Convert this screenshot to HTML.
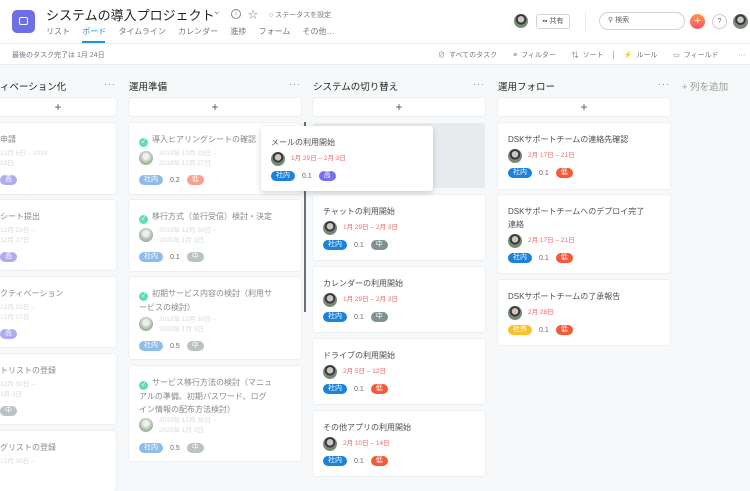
<!DOCTYPE html>
<html><head><meta charset="utf-8"><style>
*{margin:0;padding:0;box-sizing:border-box}
body{width:750px;height:468px;overflow:hidden;font-family:"Liberation Sans","Noto Sans CJK JP",sans-serif;background:#f6f8f9;position:relative;color:#333}
.a{position:absolute}
.hdr{left:0;top:0;width:750px;height:44px;background:#fff;border-bottom:1px solid #e8ecee}
.sub{left:0;top:44px;width:750px;height:21px;background:#fff;border-bottom:1px solid #e8ecee;font-size:7px;color:#6f7782}
.card{position:absolute;background:#fff;border-radius:3px;box-shadow:0 0 0 1px #edf0f2,0 1px 1px rgba(0,0,0,.04)}
.t{position:absolute;left:10px;top:10px;font-size:8px;line-height:13px;color:#4a4f55;white-space:nowrap}
.g{color:#888}
.av{position:absolute;width:14px;height:14px;border-radius:50%;background:radial-gradient(circle at 50% 38%,#d8c3b0 0 3px,#2d3a4c 3.5px 5px,#7a8a70 5.5px)}
.avf{background:radial-gradient(circle at 50% 40%,#eee 0 3px,#cfd6cc 4px,#9fb79b 7px)}
.d{position:absolute;font-size:6.5px;line-height:10px;color:#f06a6a;white-space:nowrap}
.df{color:#d6d9dc}
.row{position:absolute;height:10px;font-size:7px;display:flex;align-items:center;gap:7px;color:#666}
.p{display:inline-block;height:10px;line-height:10px;border-radius:5px;padding:0 5px;color:#fff;font-size:7px}
.blue{background:#1b82dc}.lb{background:#8fbdeb}.vio{background:#7a6ff0}.lv{background:#b0aaf2}
.gr{background:#7f9191}.lg{background:#b9c3c3}.red{background:#f35a3a}.lr{background:#f9a18e}.yel{background:#f8c22f}
.ck{display:inline-block;width:9px;height:9px;border-radius:50%;background:#5fdcb8;color:#fff;font-size:6px;line-height:9px;text-align:center;margin-right:4px;vertical-align:-1px}
.ch{position:absolute;top:79px;font-size:9.5px;color:#222}
.dots{position:absolute;top:79px;font-size:9px;color:#888;letter-spacing:1px}
.add{position:absolute;top:98px;height:18px;background:#fff;border-radius:3px;box-shadow:0 0 0 1px #edf0f2;text-align:center;font-size:12px;line-height:18px;color:#555}
</style></head><body>
<div class="a hdr"></div>
<div class="a" style="left:12px;top:10px;width:23px;height:23px;border-radius:5px;background:#6d6fe6"><div class="a" style="left:7px;top:7px;width:9px;height:8px;border:1.3px solid #fff;border-radius:2px"></div></div>
<div class="a" style="left:46px;top:5px;font-size:13px;color:#222">システムの導入プロジェクト</div>
<div class="a" style="left:213px;top:6px;font-size:9px;color:#777">⌄</div>
<div class="a" style="left:231px;top:9px;width:10px;height:10px;border:1px solid #888;border-radius:50%;font-size:6px;text-align:center;line-height:8px;color:#777">i</div>
<div class="a" style="left:248px;top:6px;font-size:10px;color:#888">☆</div>
<div class="a" style="left:269px;top:10px;font-size:7px;color:#777">○ ステータスを設定</div>
<div class="a" style="left:46px;top:26px;font-size:8px;color:#6f7782;word-spacing:10px;white-space:nowrap">リスト <span style="color:#1a93d9">ボード</span> タイムライン カレンダー 進捗 フォーム その他…</div>
<div class="a" style="left:82px;top:41px;width:23px;height:2px;background:#1a93d9"></div>
<div class="av a" style="left:514px;top:14px"></div>
<div class="a" style="left:536px;top:14px;width:34px;height:15px;border:1px solid #cfd3d6;border-radius:3px;font-size:7px;line-height:13px;text-align:center;color:#555">▪▪ 共有</div>
<div class="a" style="left:585px;top:12px;width:1px;height:19px;background:#e8ecee"></div>
<div class="a" style="left:599px;top:12px;width:86px;height:18px;border:1px solid #cfd3d6;border-radius:9px;font-size:7px;line-height:16px;padding-left:8px;color:#666">⚲ 検索</div>
<div class="a" style="left:690px;top:14px;width:15px;height:15px;border-radius:50%;background:linear-gradient(#ff9a4a,#f6536d);color:#fff;font-size:11px;line-height:15px;text-align:center">+</div>
<div class="a" style="left:712px;top:14px;width:15px;height:15px;border-radius:50%;border:1px solid #ccc;font-size:7px;line-height:13px;text-align:center;color:#666">?</div>
<div class="av a" style="left:733px;top:14px;width:15px;height:15px"></div>
<div class="a sub"><span class="a" style="left:12px;top:6px">最後のタスク完了は 1月 24日</span>
<span class="a" style="left:438px;top:6px;white-space:nowrap;word-spacing:2px">⊘ すべてのタスク &nbsp;&nbsp; ≡ フィルター &nbsp;&nbsp; ⇅ ソート &nbsp;│&nbsp; ⚡ ルール &nbsp;&nbsp; ▭ フィールド &nbsp;&nbsp;&nbsp; ···</span></div>

<div class="ch" style="left:0">ィベーション化</div><div class="dots" style="left:104px">···</div>
<div class="ch" style="left:129px">運用準備</div><div class="dots" style="left:289px">···</div>
<div class="ch" style="left:313px">システムの切り替え</div><div class="dots" style="left:473px">···</div>
<div class="ch" style="left:498px">運用フォロー</div><div class="dots" style="left:658px">···</div>
<div class="ch" style="left:682px;color:#999">+ 列を追加</div>
<div class="add" style="left:0;width:116px">+</div>
<div class="add" style="left:129px;width:172px">+</div>
<div class="add" style="left:313px;width:172px">+</div>
<div class="add" style="left:498px;width:172px">+</div>

<!-- col0 -->
<div class="card" style="left:-60px;top:123px;width:176px;height:71px"><div class="t g" style="left:60px">申請</div><div class="d df" style="left:60px;top:26px">12月 6日 – 2019<br>10日</div><div class="row" style="left:60px;top:52px"><span class="p lv">高</span></div></div>
<div class="card" style="left:-60px;top:200px;width:176px;height:70px"><div class="t g" style="left:60px">シート提出</div><div class="d df" style="left:60px;top:26px">12月 23日 –<br>12月 27日</div><div class="row" style="left:60px;top:52px"><span class="p lv">高</span></div></div>
<div class="card" style="left:-60px;top:277px;width:176px;height:70px"><div class="t g" style="left:60px">クティベーション</div><div class="d df" style="left:60px;top:26px">12月 23日 –<br>12月 27日</div><div class="row" style="left:60px;top:52px"><span class="p lv">高</span></div></div>
<div class="card" style="left:-60px;top:354px;width:176px;height:70px"><div class="t g" style="left:60px">トリストの登録</div><div class="d df" style="left:60px;top:26px">12月 30日 –<br>1月 3日</div><div class="row" style="left:60px;top:52px"><span class="p lg">中</span></div></div>
<div class="card" style="left:-60px;top:431px;width:176px;height:60px"><div class="t g" style="left:60px">グリストの登録</div><div class="d df" style="left:60px;top:26px">12月 30日 –</div></div>

<!-- col1 -->
<div class="card" style="left:129px;top:123px;width:172px;height:71px"><div class="t g"><span class="ck">✓</span>導入ヒアリングシートの確認</div><div class="av avf" style="left:10px;top:28px"></div><div class="d df" style="left:30px;top:26px">2019年 12月 23日 –<br>2019年 12月 27日</div><div class="row" style="left:10px;top:52px"><span class="p lb">社内</span>0.2<span class="p lr">低</span></div></div>
<div class="card" style="left:129px;top:200px;width:172px;height:71px"><div class="t g"><span class="ck">✓</span>移行方式（並行受信）検討・決定</div><div class="av avf" style="left:10px;top:28px"></div><div class="d df" style="left:30px;top:26px">2019年 12月 30日 –<br>2020年 1月 3日</div><div class="row" style="left:10px;top:52px"><span class="p lb">社内</span>0.1<span class="p lg">中</span></div></div>
<div class="card" style="left:129px;top:277px;width:172px;height:82px"><div class="t g"><span class="ck">✓</span>初期サービス内容の検討（利用サ<br>ービスの検討）</div><div class="av avf" style="left:10px;top:40px"></div><div class="d df" style="left:30px;top:38px">2019年 12月 30日 –<br>2020年 1月 3日</div><div class="row" style="left:10px;top:64px"><span class="p lb">社内</span>0.5<span class="p lg">中</span></div></div>
<div class="card" style="left:129px;top:366px;width:172px;height:95px"><div class="t g"><span class="ck">✓</span>サービス移行方法の検討（マニュ<br>アルの準備、初期パスワード、ログ<br>イン情報の配布方法検討）</div><div class="av avf" style="left:10px;top:52px"></div><div class="d df" style="left:30px;top:50px">2019年 12月 30日 –<br>2020年 1月 3日</div><div class="row" style="left:10px;top:77px"><span class="p lb">社内</span>0.5<span class="p lg">中</span></div></div>

<!-- col2 -->
<div class="a" style="left:313px;top:123px;width:172px;height:65px;background:#e8ebed;border-radius:3px"></div>
<div class="a" style="left:304px;top:122px;width:2px;height:190px;background:#6b6f73"></div>
<div class="card" style="left:313px;top:195px;width:172px;height:65px"><div class="t">チャットの利用開始</div><div class="av" style="left:10px;top:26px"></div><div class="d" style="left:30px;top:28px">1月 29日 – 2月 3日</div><div class="row" style="left:10px;top:45px"><span class="p blue">社内</span>0.1<span class="p gr">中</span></div></div>
<div class="card" style="left:313px;top:267px;width:172px;height:65px"><div class="t">カレンダーの利用開始</div><div class="av" style="left:10px;top:26px"></div><div class="d" style="left:30px;top:28px">1月 29日 – 2月 3日</div><div class="row" style="left:10px;top:45px"><span class="p blue">社内</span>0.1<span class="p gr">中</span></div></div>
<div class="card" style="left:313px;top:339px;width:172px;height:65px"><div class="t">ドライブの利用開始</div><div class="av" style="left:10px;top:26px"></div><div class="d" style="left:30px;top:28px">2月 5日 – 12日</div><div class="row" style="left:10px;top:45px"><span class="p blue">社内</span>0.1<span class="p red">低</span></div></div>
<div class="card" style="left:313px;top:411px;width:172px;height:65px"><div class="t">その他アプリの利用開始</div><div class="av" style="left:10px;top:26px"></div><div class="d" style="left:30px;top:28px">2月 10日 – 14日</div><div class="row" style="left:10px;top:45px"><span class="p blue">社内</span>0.1<span class="p red">低</span></div></div>
<div class="card" style="left:261px;top:126px;width:172px;height:65px;box-shadow:0 2px 6px rgba(0,0,0,.18)"><div class="t">メールの利用開始</div><div class="av" style="left:10px;top:26px"></div><div class="d" style="left:30px;top:28px">1月 29日 – 2月 3日</div><div class="row" style="left:10px;top:45px"><span class="p blue">社内</span>0.1<span class="p vio">高</span></div></div>

<!-- col3 -->
<div class="card" style="left:498px;top:123px;width:172px;height:66px"><div class="t">DSKサポートチームの連絡先確認</div><div class="av" style="left:10px;top:26px"></div><div class="d" style="left:30px;top:28px">2月 17日 – 21日</div><div class="row" style="left:10px;top:45px"><span class="p blue">社内</span>0.1<span class="p red">低</span></div></div>
<div class="card" style="left:498px;top:195px;width:172px;height:78px"><div class="t">DSKサポートチームへのデプロイ完了<br>連絡</div><div class="av" style="left:10px;top:39px"></div><div class="d" style="left:30px;top:41px">2月 17日 – 21日</div><div class="row" style="left:10px;top:58px"><span class="p blue">社内</span>0.1<span class="p red">低</span></div></div>
<div class="card" style="left:498px;top:280px;width:172px;height:65px"><div class="t">DSKサポートチームの了承報告</div><div class="av" style="left:10px;top:26px"></div><div class="d" style="left:30px;top:28px">2月 28日</div><div class="row" style="left:10px;top:45px"><span class="p yel">社外</span>0.1<span class="p red">低</span></div></div>
</body></html>
